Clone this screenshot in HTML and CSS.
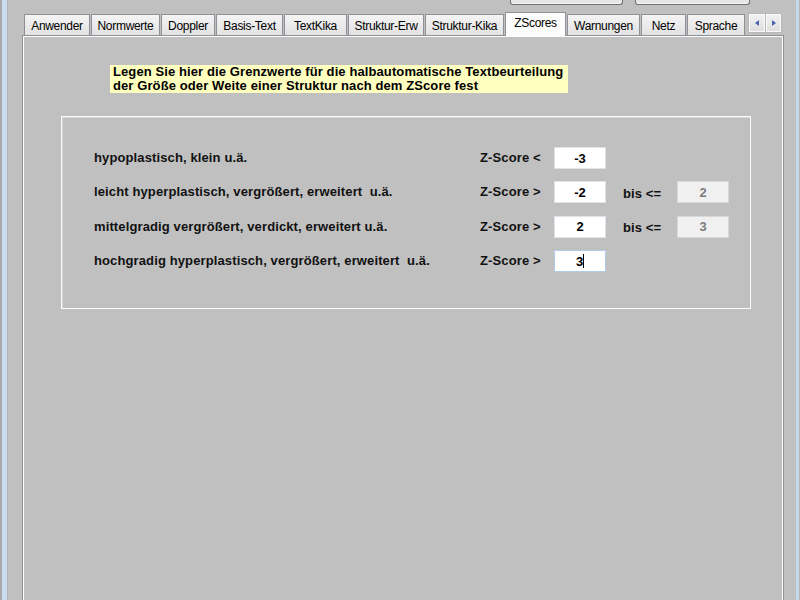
FILE: index.html
```html
<!DOCTYPE html>
<html lang="de">
<head>
<meta charset="utf-8">
<title>ZScores</title>
<link rel="stylesheet" href="styles.css">
</head>
<body>
<div class="window">
  <div class="frame-left"></div>
  <div class="client">
    <div class="topbar">
      <div class="btn btn-a"></div>
      <div class="btn btn-b"></div>
    </div>
    <div class="tabctl">
      <div class="tabstrip">
        <div class="tab">Anwender</div>
        <div class="tab">Normwerte</div>
        <div class="tab">Doppler</div>
        <div class="tab">Basis-Text</div>
        <div class="tab">TextKika</div>
        <div class="tab">Struktur-Erw</div>
        <div class="tab">Struktur-Kika</div>
        <div class="tab active">ZScores</div>
        <div class="tab">Warnungen</div>
        <div class="tab">Netz</div>
        <div class="tab">Sprache</div>
        <div class="scroller">
          <div class="sbtn"><span class="tri left"></span></div>
          <div class="sbtn"><span class="tri right"></span></div>
        </div>
      </div>
      <div class="page">
        <div class="hint">Legen Sie hier die Grenzwerte für die halbautomatische Textbeurteilung<br>der Größe oder Weite einer Struktur nach dem ZScore fest</div>
        <div class="group">
          <div class="grid">
            <div class="lbl">hypoplastisch, klein u.ä.</div>
            <div class="lbl">Z-Score &lt;</div>
            <div class="field">-3</div>
            <div></div>
            <div></div>

            <div class="lbl">leicht hyperplastisch, vergrößert, erweitert&nbsp; u.ä.</div>
            <div class="lbl">Z-Score &gt;</div>
            <div class="field">-2</div>
            <div class="lbl bis">bis &lt;=</div>
            <div class="field disabled">2</div>

            <div class="lbl">mittelgradig vergrößert, verdickt, erweitert u.ä.</div>
            <div class="lbl">Z-Score &gt;</div>
            <div class="field">2</div>
            <div class="lbl bis">bis &lt;=</div>
            <div class="field disabled">3</div>

            <div class="lbl">hochgradig hyperplastisch, vergrößert, erweitert&nbsp; u.ä.</div>
            <div class="lbl">Z-Score &gt;</div>
            <div class="field focus">3<span class="caret"></span></div>
            <div></div>
            <div></div>
          </div>
        </div>
      </div>
    </div>
  </div>
  <div class="frame-right"></div>
</div>
</body>
</html>
```
FILE: styles.css
```css
* { box-sizing: border-box; }
html, body { margin: 0; height: 100%; }
body {
  background: #c0c0c0;
  font-family: "Liberation Sans", Arial, sans-serif;
  color: #000;
  overflow: hidden;
}
.window { display: flex; height: 620px; }
.frame-left {
  width: 8px; flex: none;
  background: linear-gradient(to right, #a8a8a8 0 2px, #c9dcf1 2px 7px, #b4b4b4 7px 8px);
}
.frame-right {
  width: 10px; flex: none;
  background: linear-gradient(to right, #c0c0c0 0 6px, #c4d8ee 6px 9px, #b4b4b4 9px);
}
.client { flex: 1; min-width: 0; display: flex; flex-direction: column; }

.topbar { height: 12px; display: flex; gap: 12px; padding-left: 502px; flex: none; }
.btn {
  height: 5px;
  border: 1px solid #707070; border-top: none;
  border-radius: 0 0 3px 3px;
  background: #e6e6e6;
  box-shadow: inset 0 -1px 0 #f6f6f6;
}
.btn-a { width: 113px; }
.btn-b { width: 115px; }

.tabctl { margin-left: 14px; width: 762px; flex: 1; display: flex; flex-direction: column; }
.tabstrip {
  height: 23px; flex: none;
  display: flex; align-items: flex-end; gap: 1px;
  padding-left: 2px;
  position: relative; z-index: 1;
}
.tab {
  height: 21px;
  border: 1px solid #8d9096; border-bottom: none;
  background: linear-gradient(#f4f4f4, #e2e2e2);
  font-size: 12px;
  letter-spacing: -0.3px;
  display: flex; align-items: center; justify-content: center;
  white-space: nowrap;
  padding-top: 1px;
}
.tab:nth-child(1) { width: 66px; }
.tab:nth-child(2) { width: 69px; }
.tab:nth-child(3) { width: 54px; }
.tab:nth-child(4) { width: 67px; }
.tab:nth-child(5) { width: 63px; }
.tab:nth-child(6) { width: 76px; }
.tab:nth-child(7) { width: 79px; }
.tab:nth-child(8) { width: 61px; }
.tab:nth-child(9) { width: 73px; }
.tab:nth-child(10) { width: 45px; }
.tab:nth-child(11) { width: 58px; }
.tab.active {
  height: 24px; margin-bottom: -1px;
  background: #fcfcfc;
  padding-top: 0; padding-bottom: 3px;
}
.scroller {
  align-self: flex-start; margin-top: 1px; margin-left: 2px;
  display: flex;
}
.sbtn {
  width: 18px; height: 20px;
  border: 1px solid #b8b8b8;
  background: linear-gradient(#f2f2f2, #dedede);
  display: flex; align-items: center; justify-content: center;
  box-shadow: inset 0 0 0 1px #fafafa;
}
.sbtn + .sbtn { width: 17px; margin-left: -1px; }
.tri { width: 0; height: 0; border-top: 3px solid transparent; border-bottom: 3px solid transparent; }
.tri.left { border-right: 4px solid #4a62b0; }
.tri.right { border-left: 4px solid #4a62b0; }

.page {
  flex: 1;
  border: 1px solid #8d9096;
  box-shadow: inset 0 0 0 1px #fdfdfd;
  background: #c0c0c0;
  padding: 29px 0 0 38px;
}
.hint {
  margin-left: 49px;
  width: 458px; height: 28px;
  padding: 0 3px;
  background: #ffffc0;
  font-weight: bold; font-size: 13px; line-height: 14px;
  letter-spacing: 0.1px;
  white-space: nowrap;
}
.group {
  margin-top: 23px;
  width: 690px; height: 193px;
  border: 1px solid #fafafa;
  box-shadow: inset 1px 1px 0 #d6d6d6;
  padding: 30px 0 0 32px;
}
.grid {
  display: grid;
  grid-template-columns: 386px 74px 52px 71px 52px;
  grid-auto-rows: 22px;
  row-gap: 12.4px;
  align-items: center;
}
.lbl {
  font-weight: bold; font-size: 13px;
  letter-spacing: 0.12px;
  white-space: nowrap;
  color: #111;
  margin-top: -1px;
}
.bis { padding-left: 17px; padding-top: 3px; }
.field {
  height: 22px;
  background: #fff;
  border: 1px solid #e1e3ea;
  display: flex; align-items: center; justify-content: center;
  font-weight: bold; font-size: 13px;
}
.field.disabled { background: #f0f0f0; border-color: #d7d7d7; color: #7c7c7c; }
.field.focus { border-color: #b2cbe6; }
.caret { width: 1px; height: 14px; background: #000; margin-left: 0; }
```
